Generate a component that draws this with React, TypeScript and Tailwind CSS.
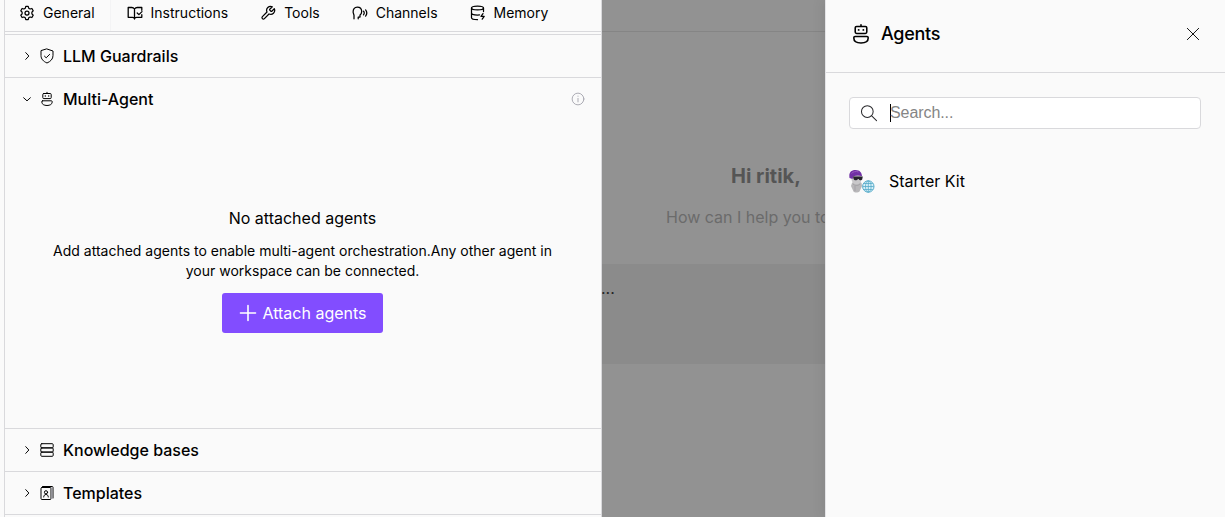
import type { ReactNode } from "react";

type IconProps = { size?: number; stroke?: number; className?: string; children?: ReactNode };

function Icon({ size = 16, stroke = 1, className = "", children }: IconProps) {
  return (
    <svg
      width={size}
      height={size}
      viewBox="0 0 16 16"
      fill="none"
      stroke="currentColor"
      strokeWidth={stroke}
      strokeLinecap="round"
      strokeLinejoin="round"
      className={`shrink-0 ${className}`}
    >
      {children}
    </svg>
  );
}

const GearIcon = () => (
  <Icon stroke={1.25}>
    <path d="M6.8 1.4h2.4l.5 1.8 1.4.8 1.8-.5 1.3 2.2-1.3 1.4v1.8l1.3 1.4-1.3 2.2-1.8-.5-1.4.8-.5 1.8H6.8l-.5-1.8-1.4-.8-1.8.5-1.3-2.2 1.3-1.4V7.100l-1.3-1.400 1.300-2.200 1.800.500 1.400-.800z" />
    <circle cx="8" cy="8" r="2" />
  </Icon>
);

const BookIcon = () => (
  <Icon stroke={1.3}>
    <path d="M7.500 4C6.800 3 5.900 2.500 4.800 2.500H1.200v9.800h4.200c1.200 0 2.100.6 2.100 1.700V4C8.200 3 9.200 2.500 10.300 2.500h4.500v2.800M7.500 14c0-1.100 1-1.700 2.200-1.700h5.100v-2.600M10.200 8l1.700 1.600L15 6.600" />
  </Icon>
);

const WrenchIcon = () => (
  <Icon stroke={1.25}>
    <path d="M9.800 4.200a.7.7 0 0 0 0 .9l1.100 1.100a.7.7 0 0 0 .9 0l2.500-2.500a4 4 0 0 1-5.300 5.300l-4.600 4.600a1.400 1.400 0 0 1-2-2L7 7a4 4 0 0 1 5.300-5.300z" />
  </Icon>
);

const VoiceIcon = () => (
  <Icon stroke={1.25}>
    <path d="M2 13.800v-3.600L1.200 7.600C.8 4.400 2.500 2 5.300 2s4.400 1.900 4.400 4.600c0 1.700-.7 2.800-1.700 3.400v2.100H6.200v1.700M11.500 6.200c.8 1 .8 2.600 0 3.600M13.600 4.900c1.400 1.800 1.400 4.400 0 6.200" />
  </Icon>
);

const MemoryIcon = () => (
  <Icon stroke={1.25}>
    <ellipse cx="7.500" cy="3" rx="6" ry="1.900" />
    <path d="M1.500 3v9.800c0 1.100 2.500 1.900 6 1.900M13.500 3v3.500M1.500 8c0 1.200 2.700 2 6 2 .7 0 1.400 0 2-.1M13 8.600l-2 2.800h3.200l-2 2.800" />
  </Icon>
);

const ShieldIcon = () => (
  <Icon>
    <path d="M8 1 14 3v4.500c0 3.500-2.300 5.900-6 7.500-3.700-1.600-6-4-6-7.500V3zM5.500 8.200l1.700 1.600 3.400-3.400" />
  </Icon>
);

const BotIcon = ({ size = 16, stroke = 1 }: { size?: number; stroke?: number }) => (
  <Icon size={size} stroke={stroke}>
    <path d="M8 1.300v1" />
    <rect x="3.800" y="2.500" width="8.400" height="5.100" rx="1" />
    <path d="M3.600 9.800h8.800c.5 0 .8.300.8.800v.5c0 2.100-2.200 3.400-5.200 3.400s-5.200-1.300-5.200-3.400v-.5c0-.5.300-.8.800-.8z" />
    <circle cx="6.300" cy="5" r=".7" fill="currentColor" stroke="none" />
    <circle cx="9.700" cy="5" r=".7" fill="currentColor" stroke="none" />
  </Icon>
);

const StackIcon = () => (
  <Icon>
    <rect x="1.800" y="1.700" width="12.400" height="4.200" rx="1" />
    <rect x="1.800" y="5.900" width="12.400" height="4.200" rx="1" />
    <rect x="1.800" y="10.100" width="12.400" height="4.200" rx="1" />
  </Icon>
);

const TemplateIcon = () => (
  <Icon>
    <rect x="2" y="2.500" width="10" height="12" rx="1" />
    <path d="M3.500 1.500h9.700c.5 0 .8.300.8.800v10.700M4.700 12c0-1.500.9-2.500 2.300-2.500s2.300 1 2.300 2.500" />
    <path d="M12.900 2.500v11" className="text-[#a1a1aa]" />
    <circle cx="7" cy="7.300" r="1.600" />
  </Icon>
);

const PlusIcon = () => (
  <Icon size={18} stroke={1.400}>
    <path d="M8 1.300v13.400M1.300 8h13.400" />
  </Icon>
);

const SearchIcon = () => (
  <Icon size={18} stroke={0.900} className="text-[#27272a]">
    <circle cx="6.500" cy="6.700" r="5.200" />
    <path d="m10.400 10.600 4.300 4.200" />
  </Icon>
);

function Chevron({ open = false }: { open?: boolean }) {
  return (
    <Icon size={12} stroke={1.300}>
      <path d={open ? "m3.500 6.300 4.500 4.200 4.500-4.200" : "m6.300 3.500 4.200 4.500-4.200 4.500"} />
    </Icon>
  );
}

const tabs = [
  { label: "Instructions", icon: <BookIcon /> },
  { label: "Tools", icon: <WrenchIcon /> },
  { label: "Channels", icon: <VoiceIcon /> },
  { label: "Memory", icon: <MemoryIcon /> },
];

function SectionHeader({ label, icon, open, children }: { label: string; icon: ReactNode; open?: boolean; children?: ReactNode }) {
  return (
    <div className={`flex shrink-0 items-center pr-4 pl-4 ${open ? "h-[42px]" : "h-[43px]"}`}>
      <Chevron open={open} />
      <span className="mr-2 ml-1.5 flex">{icon}</span>
      <h2 className="flex-1 text-base font-medium">{label}</h2>
      {children}
    </div>
  );
}

function AgentAvatar() {
  return (
    <svg width="28" height="26" viewBox="1 0 28 26" className="shrink-0">
      <path d="M4 15c1-2 8-2 9.500 0l.5 3-2.500 5.500c-1.500 1.300-5 1.300-6 0L3 18z" fill="#b8b7b9" />
      <path d="M5 16c2 2 5 2 7 0M7 18v5" stroke="#98969a" strokeWidth=".6" fill="none" />
      <ellipse cx="8.500" cy="11" rx="5" ry="5.200" fill="#c9c8ca" />
      <path d="M1.500 10C.7 5 2.500 2 7.500 2c4.500 0 6.500 3 6.500 6.200-3-.9-6-.8-8.700.3L4.500 11z" fill="#7130a5" />
      <path d="M3.500 5.500C5 3.500 8 3 10.500 4" stroke="#9758bd" fill="none" />
      <path d="M5 8.500h9.800l-.6 3c-.7 1.200-2.700 1.200-3.500-.6h-.9c-.5 1.800-3.500 2-4.200.2z" fill="#26222d" />
      <circle cx="20.300" cy="18.500" r="5.700" fill="#d8f0f8" stroke="#55abc9" strokeWidth="1" />
      <path d="M14.800 18.500h11M20.300 12.800v11.400M15.900 15.500h8.800M15.900 21.500h8.800" stroke="#55abc9" strokeWidth=".8" />
      <ellipse cx="20.300" cy="18.500" rx="2.800" ry="5.700" fill="none" stroke="#55abc9" strokeWidth=".8" />
    </svg>
  );
}

export default function App() {
  return (
    <main className="flex h-[517px] w-[1225px] overflow-hidden bg-[#fafafa] font-['Inter',sans-serif] text-black">
      <section className="ml-1 flex w-[598px] shrink-0 flex-col border-x border-[#d9d9dc]">
        <nav className="flex h-8 shrink-0 border-b border-[#d9d9dc] text-sm">
          <div className="flex h-[26px] items-center gap-2 pr-[15px] pl-[14px]">
            <GearIcon />
            General
          </div>
          <div className="w-px bg-[#f4f4f5]" />
          {tabs.map((tab) => (
            <div key={tab.label} className="flex h-[26px] items-center gap-2 px-4">
              {tab.icon}
              {tab.label}
            </div>
          ))}
        </nav>
        <div className="mt-0.5 flex flex-1 flex-col divide-y divide-[#d9d9dc] border-t border-[#d9d9dc]">
          <SectionHeader label="LLM Guardrails" icon={<ShieldIcon />} />
          <div className="flex h-[351px] shrink-0 flex-col">
            <SectionHeader label="Multi-Agent" icon={<BotIcon />} open>
              <Icon size={14} className="text-[#a1a1aa]">
                <circle cx="8" cy="8" r="6.700" />
                <path d="M8 7.300v4M8 4.700v.2" />
              </Icon>
            </SectionHeader>
            <div className="flex flex-col items-center pt-[86px] pr-px text-center">
              <h3 className="text-base leading-6">No attached agents</h3>
              <p className="mt-[11px] w-[530px] text-sm leading-5">
                Add attached agents to enable multi-agent orchestration.Any other agent in your workspace can be connected.
              </p>
              <button className="mt-3 flex h-10 w-[161px] items-center justify-center gap-[5px] rounded-[3px] bg-[#824dff] pl-px text-base text-white">
                <PlusIcon />
                Attach agents
              </button>
            </div>
          </div>
          <SectionHeader label="Knowledge bases" icon={<StackIcon />} />
          <SectionHeader label="Templates" icon={<TemplateIcon />} />
          <div />
        </div>
      </section>

      <section className="flex w-[223px] shrink-0 flex-col overflow-hidden bg-[#929292] whitespace-nowrap">
        <div className="h-8 shrink-0 border-b border-[#858585]" />
        <div className="flex h-[232px] shrink-0 flex-col pt-[130px]">
          <h1 className="pl-[129px] text-xl leading-7 font-bold text-[#555555]">Hi ritik,</h1>
          <p className="mt-[15px] pl-16 text-base leading-6 text-[#6b6b6b]">How can I help you today?</p>
        </div>
        <div className="h-[100px] shrink-0 bg-[#8b8b8b] pt-3 text-base leading-6 text-[#252525]">
          <span className="-ml-px">...</span>
        </div>
      </section>

      <aside className="flex flex-1 flex-col border-l border-[#e4e4e7] shadow-[-2px_0_12px_rgba(0,0,0,0.08)]">
        <header className="flex h-[73px] shrink-0 items-center border-b border-[#d9d9dc] pr-[25px] pb-1 pl-[24px]">
          <BotIcon size={22} stroke={1.150} />
          <h2 className="ml-[9px] flex-1 text-lg font-medium tracking-[-0.015em]">Agents</h2>
          <Icon size={14} stroke={1.050}>
            <path d="m1.500 1.500 13 13M14.500 1.500l-13 13" />
          </Icon>
        </header>
        <div className="flex flex-col px-[23px] pt-6 pr-6">
          <label className="flex h-8 items-center rounded-[4px] border border-[#d9d9dc] bg-white pl-[10px]">
            <SearchIcon />
            <span className="ml-3 h-[18px] w-px bg-black" />
            <span className="-ml-px font-['Liberation_Sans',sans-serif] text-base leading-6 tracking-[-0.005em] text-[#858585]">Search...</span>
          </label>
          <div className="mt-[39px] flex items-center">
            <AgentAvatar />
            <span className="ml-3 text-base">Starter Kit</span>
          </div>
        </div>
      </aside>
    </main>
  );
}
